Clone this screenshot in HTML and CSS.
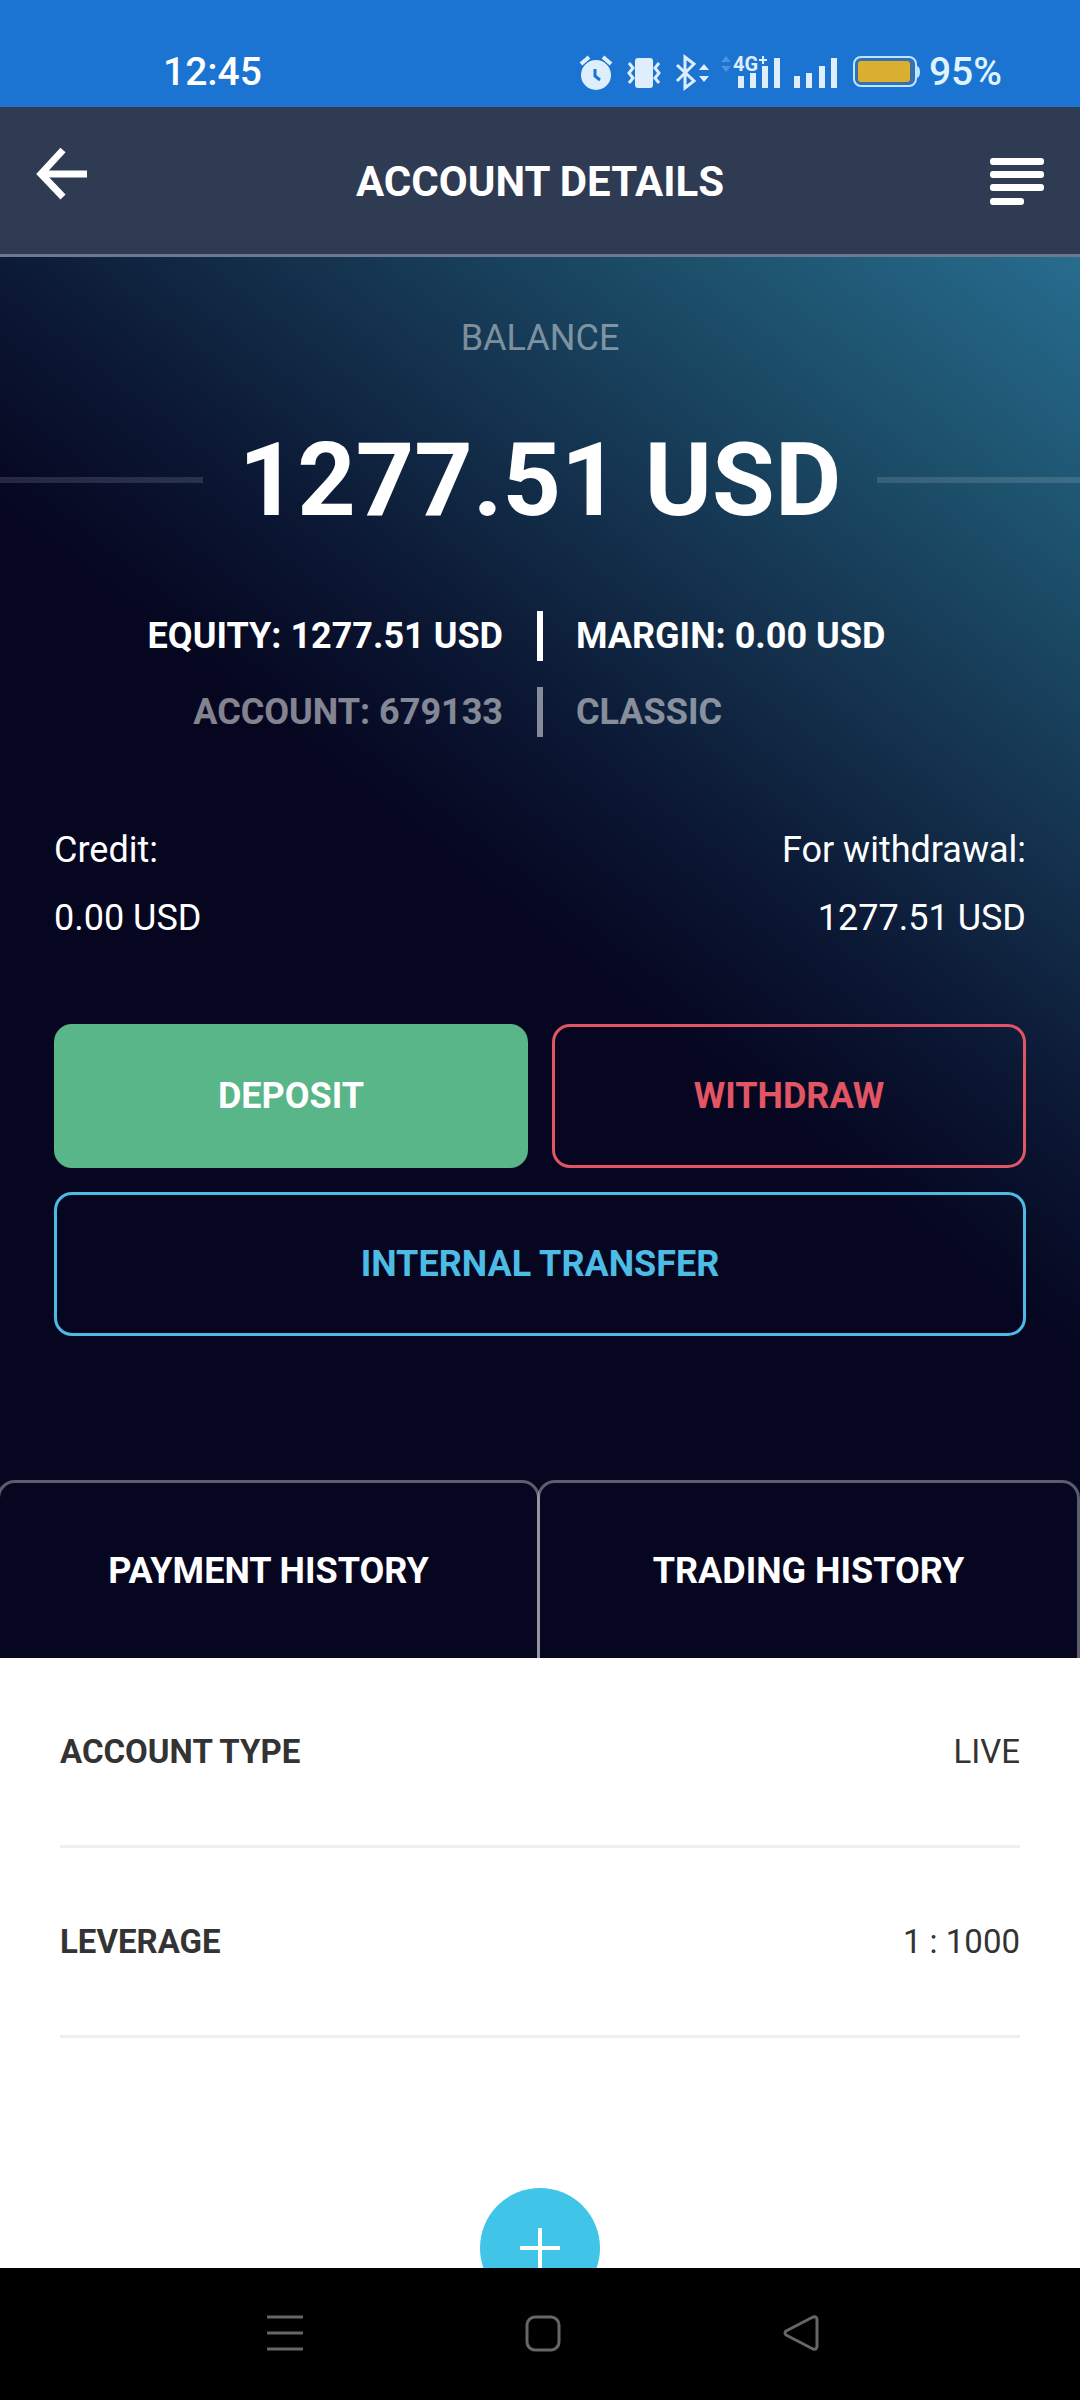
FILE: index.html
```html
<!DOCTYPE html>
<html lang="en">
<head>
<meta charset="utf-8">
<meta name="viewport" content="width=device-width, initial-scale=1">
<title>Account details</title>
<link rel="stylesheet" href="styles.css">
</head>
<body>
<div class="status-bar">
  <span class="status-time">12:45</span>
  <div class="status-icons">
    <svg class="status-glyphs" width="264" height="40" viewBox="578 50 264 40" aria-hidden="true">
      <g fill="#dfeefc">
        <circle cx="597" cy="73" r="15"/>
        <path d="M582 62l8-7M612 62l-8-7" stroke="#dfeefc" stroke-width="4"/>
        <path d="M596 67v7l5 4" fill="none" stroke="#1b74d2" stroke-width="3"/>
        <rect x="636" y="56" width="18" height="30" rx="3"/>
        <path d="M630 61l4 5-4 5 4 5-4 5M660 61l-4 5 4 5-4 5 4 5" fill="none" stroke="#dfeefc" stroke-width="3"/>
        <path d="M678 63l17 16-9 7V55l9 7-17 17" fill="none" stroke="#dfeefc" stroke-width="3"/>
        <path d="M700 68l5-6 5 6zM700 74l5 6 5-6z"/>
        <path d="M722 60l5-6 5 6zM722 64l5 6 5-6z" opacity=".25"/>
        <path d="M739 74h6v12h-6zM751 71h6v15h-6zM763 64h6v22h-6zM775 56h6v30h-6z"/>
        <path d="M795 74h6v12h-6zM807 71h6v15h-6zM820 64h6v22h-6zM832 56h6v30h-6z"/>
        <text class="network-label" x="734" y="69">4G</text>
        <path d="M760 58h8M764 54v8" fill="none" stroke="#dfeefc" stroke-width="2"/>
      </g>
    </svg>
    <svg class="status-battery" width="70" height="32" viewBox="0 0 70 32" aria-hidden="true">
      <rect x="1" y="1" width="62" height="29" rx="7" fill="none" stroke="#bfe6ff" stroke-width="2"/>
      <rect x="3" y="3" width="58" height="25" rx="5" fill="#3f6fa8"/>
      <rect x="5" y="5" width="52" height="21" rx="3" fill="#dbb030"/>
      <path d="M64 10q3 1 3 6t-3 6z" fill="#bfe6ff"/>
    </svg>
    <span class="status-percent">95%</span>
  </div>
</div>

<header class="app-header">
  <button class="icon-button" type="button" aria-label="Back">
    <svg width="54" height="54" viewBox="0 0 54 54" fill="none" stroke="#fff" stroke-width="7"><path d="M27 3L5 27l22 23M5 27h46"/></svg>
  </button>
  <h1 class="app-title">ACCOUNT DETAILS</h1>
  <button class="icon-button" type="button" aria-label="Menu">
    <svg width="54" height="58" viewBox="0 0 54 58" fill="#fff"><rect y="11" width="54" height="7" rx="3"/><rect y="24" width="54" height="7" rx="3"/><rect y="37" width="54" height="7" rx="3"/><rect y="51" width="34" height="7" rx="3"/></svg>
  </button>
</header>

<section class="summary">
  <h2 class="balance-label">BALANCE</h2>
  <p class="balance"><span class="balance-value">1277.51 USD</span></p>
  <div class="facts">
    <span class="fact-left">EQUITY: 1277.51 USD</span><span class="fact-right">MARGIN: 0.00 USD</span>
  </div>
  <div class="facts facts-muted">
    <span class="fact-left">ACCOUNT: 679133</span><span class="fact-right">CLASSIC</span>
  </div>
  <dl class="funds">
    <div class="fund"><dt>Credit:</dt><dd>0.00 USD</dd></div>
    <div class="fund fund-end"><dt>For withdrawal:</dt><dd>1277.51 USD</dd></div>
  </dl>
  <div class="actions">
    <button class="action action-deposit" type="button">DEPOSIT</button>
    <button class="action action-withdraw" type="button">WITHDRAW</button>
    <button class="action action-transfer" type="button">INTERNAL TRANSFER</button>
  </div>
  <nav class="tabs" aria-label="History">
    <button class="tab" type="button">PAYMENT HISTORY</button>
    <button class="tab" type="button">TRADING HISTORY</button>
  </nav>
</section>

<main class="details">
  <dl class="detail-list">
    <div class="detail"><dt>ACCOUNT TYPE</dt><dd>LIVE</dd></div>
    <div class="detail"><dt>LEVERAGE</dt><dd>1 : 1000</dd></div>
  </dl>
  <button class="add-button" type="button" aria-label="Add">
    <svg width="40" height="40" viewBox="0 0 40 40" stroke="#fff" stroke-width="4"><path d="M20 0v40M0 20h40"/></svg>
  </button>
</main>

<nav class="system-nav" aria-label="System">
  <button class="nav-button" type="button" aria-label="Recent apps">
    <svg width="36" height="38" viewBox="0 0 36 38" stroke="#666" stroke-width="3"><path d="M0 3h36M0 19h36M0 35h36"/></svg>
  </button>
  <button class="nav-button" type="button" aria-label="Home">
    <svg width="36" height="38" viewBox="0 0 36 38" fill="none" stroke="#666" stroke-width="3"><rect x="2" y="3" width="32" height="33" rx="8"/></svg>
  </button>
  <button class="nav-button" type="button" aria-label="Back">
    <svg width="36" height="38" viewBox="0 0 36 38" fill="none" stroke="#666" stroke-width="3" stroke-linejoin="round"><path d="M3 17L30 3q4-1 4 3v26q0 4-4 3L3 21q-2-2 0-4z"/></svg>
  </button>
</nav>
</body>
</html>
```
FILE: styles.css
```css
* {
  box-sizing: border-box;
}

body {
  display: flex;
  flex-direction: column;
  min-height: 100vh;
  margin: 0;
  overflow-x: hidden;
  background: #fff;
  color: #fff;
  font-family: Roboto, "Liberation Sans", sans-serif;
  font-size: 36px;
  line-height: 44px;
}

h1, h2, p, dl, dd {
  margin: 0;
}

button {
  padding: 0;
  border: 0;
  background: none;
  color: inherit;
  font: inherit;
  cursor: pointer;
}

svg {
  display: block;
}

.status-bar {
  display: flex;
  align-items: center;
  justify-content: space-between;
  padding: 50px 78px 13px 163px;
  background: #1b74d2;
  font-size: 39px;
  font-weight: 500;
}

.status-icons {
  display: flex;
  align-items: center;
}

.status-battery {
  margin: 0 6px 0 12px;
}

.status-percent {
  color: #dff4ff;
}

.network-label {
  font-size: 20px;
  font-weight: 700;
}

.app-header {
  display: flex;
  align-items: flex-start;
  justify-content: space-between;
  padding: 40px 36px 49px;
  border-bottom: 3px solid #6b7a92;
  background: #2f3a53;
}

.app-title {
  padding-top: 14px;
  font-size: 42px;
  font-weight: 700;
  line-height: 41px;
}

.summary {
  background: linear-gradient(38deg, #060620 51%, #0b1733 61%, #14324e 73%, #1d526d 87%, #276c8f 100%);
}

.balance-label {
  padding-top: 59px;
  color: rgba(255, 255, 255, .45);
  font-size: 36px;
  font-weight: 400;
  text-align: center;
}

.balance {
  display: flex;
  align-items: center;
  gap: 36px;
  padding: 60px 0 71px;
  font-size: 102px;
  font-weight: 700;
  line-height: 120px;
}

.balance::before,
.balance::after {
  flex: 1;
  height: 6px;
  background: rgba(255, 255, 255, .13);
  content: "";
}

.facts {
  display: grid;
  grid-template-columns: 1fr 1fr;
  margin-bottom: 26px;
  font-weight: 700;
  line-height: 50px;
}

.facts-muted {
  opacity: .5;
}

.fact-left {
  padding-right: 34px;
  border-right: 3px solid #fff;
  text-align: right;
}

.fact-right {
  padding-left: 33px;
  border-left: 3px solid #fff;
}

.funds {
  display: flex;
  justify-content: space-between;
  padding: 53px 54px 72px;
}

.fund {
  display: grid;
  line-height: 68px;
}

.fund-end {
  text-align: right;
}

.actions {
  display: grid;
  grid-template-columns: 1fr 1fr;
  gap: 24px;
  padding: 0 54px 144px;
}

.action {
  height: 144px;
  border: 3px solid;
  border-radius: 18px;
  font-weight: 700;
}

.action-deposit {
  border-color: #58b688;
  background: #58b688;
}

.action-withdraw {
  color: #e15564;
}

.action-transfer {
  grid-column: 1 / -1;
  color: #4cbce4;
}

.tabs {
  display: flex;
}

.tab {
  flex: 1;
  height: 178px;
  margin-left: -3px;
  border: 3px solid rgba(255, 255, 255, .35);
  border-bottom: 0;
  border-radius: 18px 18px 0 0;
  font-weight: 700;
}

.details {
  position: relative;
  flex: 1;
  min-height: 610px;
  overflow: hidden;
  background: #fff;
  color: #333;
}

.detail-list {
  padding: 0 60px;
  font-size: 33px;
}

.detail {
  display: flex;
  justify-content: space-between;
  padding: 72px 0 71px;
  border-bottom: 3px solid #efefef;
}

.detail dt {
  font-weight: 700;
}

/* Floats over the sheet, partly hidden behind the system bar */
.add-button {
  position: absolute;
  bottom: -40px;
  left: calc(50% - 60px);
  display: grid;
  width: 120px;
  height: 120px;
  place-items: center;
  border-radius: 50%;
  background: #40c4e8;
}

.system-nav {
  display: flex;
  justify-content: center;
  gap: 222px;
  padding: 46px 0 48px 6px;
  background: #000;
}
```
